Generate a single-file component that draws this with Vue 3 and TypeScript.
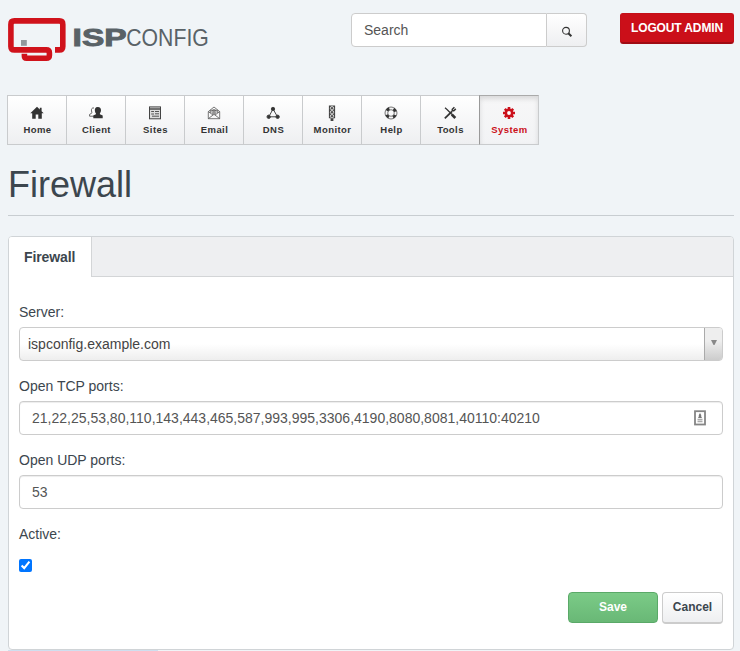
<script setup lang="ts">
import { ref } from 'vue'

interface NavItem {
  id: string
  label: string
}

const navItems: NavItem[] = [
  { id: 'home', label: 'Home' },
  { id: 'client', label: 'Client' },
  { id: 'sites', label: 'Sites' },
  { id: 'email', label: 'Email' },
  { id: 'dns', label: 'DNS' },
  { id: 'monitor', label: 'Monitor' },
  { id: 'help', label: 'Help' },
  { id: 'tools', label: 'Tools' },
  { id: 'system', label: 'System' },
]

const current = ref('system')
const server = ref('ispconfig.example.com')
const tcpPorts = ref('21,22,25,53,80,110,143,443,465,587,993,995,3306,4190,8080,8081,40110:40210')
const udpPorts = ref('53')
const active = ref(true)
const search = ref('')
</script>

<template>
  <div class="page">
    <header class="header">
      <svg class="logo" width="212" height="48" viewBox="8 16 212 48">
        <path d="M55 49.9H59.3Q62.8 49.9 62.8 46.4V24.4Q62.8 20.9 59.3 20.9H14.4Q10.9 20.9 10.9 24.4V46.4Q10.9 49.9 14.4 49.9H46.2Q49.4 49.9 49.4 53V55.2Q49.4 58.2 46.2 58.2H26.5Q24.4 58.2 24.4 56V53.8" fill="none" stroke="#d0121b" stroke-width="5.6" />
        <rect x="21" y="40" width="5.8" height="5.8" fill="#92989c" />
        <text class="logo-bold" x="72.6" y="45.8" textLength="54" lengthAdjust="spacingAndGlyphs">ISP</text>
        <text class="logo-light" x="126.3" y="45.8" textLength="82.5" lengthAdjust="spacingAndGlyphs">CONFIG</text>
      </svg>
      <form class="search" @submit.prevent>
        <input v-model="search" class="search-input" placeholder="Search" />
        <button class="search-btn" type="submit" aria-label="Search">
          <svg width="12" height="12" viewBox="0 0 12 12" fill="none" stroke="#333">
            <circle cx="5" cy="4.8" r="3.4" stroke-width="1.1" />
            <path d="M7.3 7.3L10.4 10.3" stroke-width="2" />
          </svg>
        </button>
      </form>
      <button class="logout">LOGOUT ADMIN</button>
    </header>

    <nav class="nav">
      <a v-for="item in navItems" :key="item.id" class="nav-item" :class="{ active: item.id === current }" @click="current = item.id">
        <svg class="nav-icon" width="16" height="16" viewBox="0 0 16 16">
          <g v-if="item.id === 'home'" fill="#333">
            <path d="M8 1.8L1.3 8.3H3.2V13.7H6.7V9.6H9.3V13.7H12.8V8.3H14.7L12.6 6.2V2.8H10.8V4.5Z" />
          </g>
          <g v-else-if="item.id === 'client'">
            <path d="M6 3C4.1 2.4 3.1 4.2 3.5 5.9Q4.1 7.7 3.7 8.2L1.6 9.4V11.2H6" fill="#fff" stroke="#555" stroke-width=".9" />
            <path d="M9.8 2C7.2 2 6.6 4 6.9 5.9Q7.1 7.5 7.9 8.3V9.2L5.3 10.5V13.3H14.7V10.5L11.9 9.2V8.3Q12.9 7.3 13 5.5C13 3.3 12.2 2 9.8 2Z" fill="#333" />
          </g>
          <g v-else-if="item.id === 'sites'" fill="none" stroke="#444">
            <rect x="2.5" y="1.9" width="11" height="11.9" fill="#ddd" />
            <path d="M3 4H13" stroke-width="1.4" />
            <path d="M4.2 6.5H7M4.2 9H7M8 6.5H12M8 8.8H12M5 11.2H12" stroke-width=".9" />
          </g>
          <g v-else-if="item.id === 'email'" fill="none" stroke="#555" stroke-width=".8">
            <path d="M2.3 6.6L8 2L13.7 6.6V13.7H2.3ZM2.3 6.6L7 10L2.3 13.7M13.7 6.6L9 10L13.7 13.7M4.3 8V5.3H11.7V8M7 10L8 9.4L9 10" />
            <circle cx="8" cy="6.8" r="2.1" />
            <circle cx="8" cy="6.8" r=".8" />
          </g>
          <g v-else-if="item.id === 'dns'" fill="#333" stroke="#444">
            <path d="M8 4L3.8 11.8H12.5Z" fill="none" stroke-width="1" />
            <circle cx="8" cy="4" r="1.7" /><circle cx="3.7" cy="11.8" r="1.7" /><circle cx="12.6" cy="11.8" r="1.7" />
          </g>
          <g v-else-if="item.id === 'monitor'">
            <path d="M4.9 .5H11.1V13.3H9.4V16H6.6V13.3H4.9Z" fill="#444" />
            <g fill="#555" stroke="#eee" stroke-width=".8">
              <circle cx="8" cy="3.2" r="1.7" /><circle cx="8" cy="7.2" r="1.7" /><circle cx="8" cy="11.2" r="1.7" />
            </g>
          </g>
          <g v-else-if="item.id === 'help'" fill="none">
            <circle cx="8" cy="8" r="4.6" stroke="#f6f6f7" stroke-width="3" />
            <circle cx="8" cy="8" r="6" stroke="#555" stroke-width=".8" />
            <circle cx="8" cy="8" r="3.3" stroke="#555" stroke-width=".8" />
            <circle class="ring" cx="8" cy="8" r="4.7" stroke="#333" stroke-width="2.8" stroke-dasharray="3.2 4.182" />
          </g>
          <g v-else-if="item.id === 'tools'" fill="none" stroke="#333">
            <path d="M3 2.8L5 4.5L10 9.5" stroke-width="1.2" />
            <path d="M9.8 9.5L13.3 13" stroke-width="2.6" />
            <path d="M10 6.3L2.8 13.4" stroke-width="1.8" />
            <path d="M12.4 2.2L10.3 4.2V5.7H11.8L13.8 3.9" stroke-width="1.5" />
          </g>
          <g v-else>
            <g stroke="#cb101b" stroke-width="2.6"><path d="M8 2V14M2 8H14M3.8 3.8L12.2 12.2M12.2 3.8L3.8 12.2" /></g>
            <circle cx="8" cy="8" r="4.4" fill="#cb101b" />
            <circle cx="8" cy="8" r="1.9" fill="#fff" />
          </g>
        </svg>
        <span>{{ item.label }}</span>
      </a>
    </nav>

    <h1 class="title">Firewall</h1>

    <main class="panel">
      <div class="tabs"><a class="tab">Firewall</a></div>
      <form class="form" @submit.prevent>
        <div class="group">
          <label>Server:</label>
          <div class="select">
            <span class="select-value">{{ server }}</span>
            <span class="select-arrow"><svg width="6" height="5" viewBox="0 0 6 5"><path d="M0 0H6L3.5 5H2.5Z" fill="#888" /></svg></span>
          </div>
        </div>
        <div class="group">
          <label for="tcp">Open TCP ports:</label>
          <div class="control">
            <input id="tcp" v-model="tcpPorts" />
            <svg width="12" height="16" viewBox="0 0 12 16">
              <rect x="1" y="1.2" width="10" height="13.3" fill="#fff" stroke="#858585" stroke-width="1.8" />
              <path d="M6 3L4.8 5V6.5L4 8H8L7.2 6.5V5Z" fill="#777" />
              <path d="M3.5 9.5H8.5M3.5 11.5H8.5" stroke="#aaa" stroke-width="1.4" />
            </svg>
          </div>
        </div>
        <div class="group">
          <label for="udp">Open UDP ports:</label>
          <div class="control"><input id="udp" v-model="udpPorts" /></div>
        </div>
        <div class="group check-group">
          <label for="active">Active:</label>
          <input id="active" v-model="active" class="check" type="checkbox" />
        </div>
        <div class="actions">
          <button class="btn save" type="submit">Save</button>
          <button class="btn cancel" type="button">Cancel</button>
        </div>
      </form>
    </main>
    <div class="status"></div>
  </div>
</template>

<style>
body {
  background: #f0f4f7;
  overflow: hidden;
}
</style>

<style scoped>
* {
  box-sizing: border-box;
}
.page {
  height: 651px;
  overflow: hidden;
  padding: 13px 6px 0 8px;
  color: #3c464e;
  font: 14px/20px "Liberation Sans", Arial, sans-serif;
}
input,
button {
  font-family: inherit;
}
.header {
  display: flex;
  align-items: flex-start;
  height: 82px;
}
.logo {
  margin-top: 3px;
  flex: none;
  overflow: visible;
}
.logo-bold {
  font: bold 24.2px "Liberation Sans", sans-serif;
  fill: #596267;
  stroke: #596267;
  stroke-width: 0.9;
}
.logo-light {
  font: 24px "Liberation Sans", sans-serif;
  fill: #596267;
}
.search {
  display: flex;
  width: 236px;
  height: 34px;
  margin-left: 131px;
}
.search-input {
  width: 196px;
  padding: 0 12px;
  border: 1px solid #ccc;
  border-radius: 4px 0 0 4px;
  background: #fff;
  color: #555;
  font-size: 14px;
  outline: 0;
}
.search-input::placeholder {
  color: #555;
}
.search-btn {
  display: flex;
  align-items: center;
  justify-content: center;
  width: 40px;
  padding: 3px 0 0;
  border: 1px solid #ccc;
  border-left: 0;
  border-radius: 0 4px 4px 0;
  background: linear-gradient(#fff, #eeeff1);
}
.logout {
  width: 114px;
  height: 31px;
  margin-left: auto;
  padding: 0;
  border: 1px solid #c40f18;
  border-bottom: 2px solid #a00b14;
  border-radius: 3px;
  background: #cb0f19;
  color: #fff;
  font-size: 12px;
  font-weight: bold;
  letter-spacing: -0.13px;
  white-space: nowrap;
}
.nav {
  display: flex;
  margin-left: -1px;
  height: 50px;
}
.nav-item {
  display: flex;
  flex-direction: column;
  align-items: center;
  width: 59px;
  padding-top: 9px;
  border: 1px solid #c9cbcd;
  border-right: 0;
  background: linear-gradient(#fff, #eeeff1);
  color: #333;
  font-size: 9.5px;
  font-weight: bold;
  line-height: 16px;
  letter-spacing: 0.42px;
  cursor: pointer;
}
.nav-item.active {
  width: 60px;
  border: 1px solid #c9cbcd;
  border-left-color: #999;
  border-top-color: #aaa;
  background: linear-gradient(#f7f7f8, #f2f3f5);
  box-shadow: inset 0 3px 5px rgba(0, 0, 0, 0.12);
  color: #cb101b;
}
.nav-icon {
  flex: none;
}
.ring {
  transform: rotate(25deg);
  transform-origin: 8px 8px;
}
.nav-item span {
  margin-top: 1px;
  padding-left: 1px;
}
.title {
  height: 71px;
  margin: 0;
  padding-top: 20px;
  border-bottom: 1px solid #c8cdd1;
  font-size: 36px;
  line-height: 40px;
  font-weight: normal;
}
.panel {
  height: 414px;
  margin-top: 20px;
  border: 1px solid #d0d4d7;
  border-radius: 4px;
  background: #fff;
  overflow: hidden;
}
.tabs {
  height: 40px;
  border-bottom: 1px solid #d3d5d7;
  background: #eeeff1;
}
.tab {
  display: block;
  width: 83px;
  height: 40px;
  padding: 10px 0 0 15px;
  border-right: 1px solid #d3d5d7;
  background: #fff;
  font-size: 14px;
  letter-spacing: -0.1px;
  font-weight: bold;
}
.form {
  padding: 25px 10px 0;
}
.group {
  display: flex;
  flex-direction: column;
  height: 74px;
}
.group label {
  height: 25px;
}
.select,
.control {
  display: flex;
  align-items: center;
  height: 34px;
  border: 1px solid #ccc;
  border-radius: 4px;
  background: #fff;
}
.select {
  overflow: hidden;
  background: linear-gradient(#fff 50%, #eee);
}
.select-value {
  flex: 1;
  padding-left: 8px;
  color: #444;
}
.select-arrow {
  display: flex;
  justify-content: center;
  width: 18px;
  height: 32px;
  padding-top: 12px;
  border-left: 1px solid #aaa;
  background: linear-gradient(#eee 40%, #ccc);
}
.control {
  padding-right: 16px;
  box-shadow: inset 0 1px 1px rgba(0, 0, 0, 0.075);
}
.control input {
  flex: 1;
  min-width: 0;
  padding: 0 12px;
  border: 0;
  background: transparent;
  color: #555;
  font-size: 14px;
  outline: 0;
}
.check-group {
  height: 66px;
}
.check {
  width: 13px;
  height: 13px;
  margin: 10px 0 0;
}
.actions {
  display: flex;
  justify-content: flex-end;
  gap: 4px;
  padding-top: 2px;
}
.btn {
  height: 31px;
  padding: 0 0 2px;
  border-radius: 4px;
  font-size: 12px;
  font-weight: bold;
}
.save {
  width: 90px;
  border: 1px solid #5aa968;
  background: linear-gradient(#7bcb87, #69b876);
  color: #fff;
}
.cancel {
  width: 61px;
  height: 32px;
  border: 1px solid #ccc;
  border-bottom-width: 2px;
  background: linear-gradient(#fff, #eeeff1);
  color: #3c464e;
}
.status {
  width: 150px;
  height: 1px;
  background: #cfdfef;
}
</style>
